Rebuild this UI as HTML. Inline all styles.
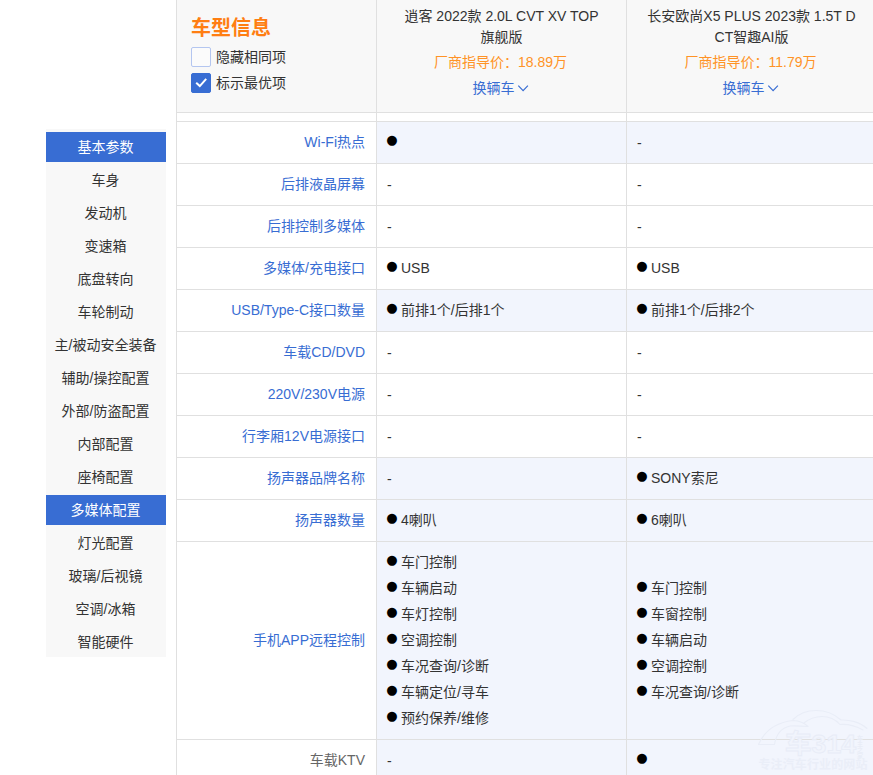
<!DOCTYPE html>
<html lang="zh-CN">
<head>
<meta charset="utf-8">
<title>车型参数对比</title>
<style>
*{box-sizing:border-box;margin:0;padding:0}
html,body{width:873px;height:775px;overflow:hidden;background:#fff}
body{position:relative;font-family:"Liberation Sans","Noto Sans CJK SC",sans-serif;font-size:14px;color:#333}
ul{list-style:none}
/* sidebar */
.side{position:absolute;left:46px;top:129px;width:120px;height:528px;background:#f8f8f8}
.side li{height:30px;line-height:30px;margin-top:3px;text-align:center;font-size:14px;color:#333;padding-right:1px}
.side li.on{background:#386dd3;color:#fff}
/* table */
.tb{position:absolute;left:176px;top:0;width:700px}
.hd{position:absolute;left:0;top:0;width:700px;height:113px;background:#f8f8f8;border-left:1px solid #e0e0e0;border-bottom:1px solid #e0e0e0}
.hd .c{position:absolute;top:0;height:112px;border-right:1px solid #e0e0e0}
.hd .c0{left:0;width:200px}
.hd .c1{left:200px;width:250px;text-align:center}
.hd .c2{left:450px;width:250px;text-align:center}
.ttl{position:absolute;left:14px;top:13px;font-size:20px;line-height:30px;font-weight:bold;color:#ff7e12}
.ck{position:absolute;left:14px;height:20px;line-height:20px;font-size:14px;color:#333;white-space:nowrap}
.ck i{display:inline-block;vertical-align:top;width:20px;height:20px;border:1px solid #b4c6f0;border-radius:2px;background:#fbfbfb;margin-right:5px;position:relative}
.ck i.on{background:#386dd3;border-color:#386dd3}
.ck i svg{position:absolute;left:-1px;top:-1px}
.nm{white-space:nowrap;position:absolute;left:0;width:100%;top:6px;line-height:21px;font-size:14px;color:#333;padding:0}
.pr{position:absolute;left:-1px;width:100%;top:52px;line-height:21px;font-size:14px;color:#ff9326}
.sw{position:absolute;left:-1px;width:100%;top:78px;line-height:21px;font-size:14px;color:#386dd3}
.sw svg{vertical-align:middle;margin-left:2px;position:relative;top:0px}
.gap{position:absolute;left:0;top:113px;width:700px;height:8px;border-left:1px solid #e0e0e0}
.gap b{position:absolute;top:0;height:8px;width:1px;background:#e0e0e0}
.rows{position:absolute;left:0;top:121px;width:700px;border-left:1px solid #e0e0e0}
.r{display:flex;width:701px;border-top:1px solid #e0e0e0;min-height:42px}
.r>div{flex:none;display:flex;flex-direction:column;justify-content:center;border-right:1px solid #e0e0e0}
.r .l{width:200px;text-align:right;padding-right:11px;padding-bottom:2px;color:#386dd3;line-height:20px}
.r .l.g{color:#666}
.r .v{width:250px;padding-left:9px;padding-bottom:2px;line-height:26px;color:#333}
.r.d .v{background:#f2f5fd}
.r .v p{white-space:nowrap}
.r .v p.n{padding-left:1px;position:relative;top:1px}
.r .v p span{display:inline-block;width:15px;height:26px;line-height:26px;vertical-align:top;font-family:"DejaVu Sans",sans-serif;font-size:13px;color:#000;position:relative;top:-2px;transform:translate(0.2px,0.4px)}
.r.big .v{padding-top:7px;padding-bottom:8px}
</style>
</head>
<body>
<ul class="side">
<li class="on">基本参数</li>
<li>车身</li>
<li>发动机</li>
<li>变速箱</li>
<li>底盘转向</li>
<li>车轮制动</li>
<li>主/被动安全装备</li>
<li>辅助/操控配置</li>
<li>外部/防盗配置</li>
<li>内部配置</li>
<li>座椅配置</li>
<li class="on">多媒体配置</li>
<li>灯光配置</li>
<li>玻璃/后视镜</li>
<li>空调/冰箱</li>
<li>智能硬件</li>
</ul>

<div class="tb">
 <div class="hd">
  <div class="c c0">
   <div class="ttl">车型信息</div>
   <div class="ck" style="top:47px"><i></i>隐藏相同项</div>
   <div class="ck" style="top:73px"><i class="on"><svg width="20" height="20" viewBox="0 0 20 20"><path d="M5.2 9.8 L8.8 13.1 L15.2 5.9" fill="none" stroke="#fff" stroke-width="2"/></svg></i>标示最优项</div>
  </div>
  <div class="c c1">
   <div class="nm">逍客 2022款 2.0L CVT XV TOP<br>旗舰版</div>
   <div class="pr">厂商指导价：18.89万</div>
   <div class="sw">换辆车<svg width="12" height="8" viewBox="0 0 12 8"><path d="M1.3 0.7 L6.1 5.6 L10.9 0.7" fill="none" stroke="#386dd3" stroke-width="1.2"/></svg></div>
  </div>
  <div class="c c2">
   <div class="nm">长安欧尚X5 PLUS 2023款 1.5T D<br>CT智趣AI版</div>
   <div class="pr">厂商指导价：11.79万</div>
   <div class="sw">换辆车<svg width="12" height="8" viewBox="0 0 12 8"><path d="M1.3 0.7 L6.1 5.6 L10.9 0.7" fill="none" stroke="#386dd3" stroke-width="1.2"/></svg></div>
  </div>
 </div>
 <div class="gap"><b style="left:199px"></b><b style="left:449px"></b></div>
 <div class="rows">
  <div class="r d"><div class="l">Wi-Fi热点</div><div class="v"><p><span>●</span></p></div><div class="v"><p class="n">-</p></div></div>
  <div class="r"><div class="l">后排液晶屏幕</div><div class="v"><p class="n">-</p></div><div class="v"><p class="n">-</p></div></div>
  <div class="r"><div class="l">后排控制多媒体</div><div class="v"><p class="n">-</p></div><div class="v"><p class="n">-</p></div></div>
  <div class="r"><div class="l">多媒体/充电接口</div><div class="v"><p><span>●</span>USB</p></div><div class="v"><p><span>●</span>USB</p></div></div>
  <div class="r d"><div class="l">USB/Type-C接口数量</div><div class="v"><p><span>●</span>前排1个/后排1个</p></div><div class="v"><p><span>●</span>前排1个/后排2个</p></div></div>
  <div class="r"><div class="l">车载CD/DVD</div><div class="v"><p class="n">-</p></div><div class="v"><p class="n">-</p></div></div>
  <div class="r"><div class="l">220V/230V电源</div><div class="v"><p class="n">-</p></div><div class="v"><p class="n">-</p></div></div>
  <div class="r"><div class="l">行李厢12V电源接口</div><div class="v"><p class="n">-</p></div><div class="v"><p class="n">-</p></div></div>
  <div class="r d"><div class="l">扬声器品牌名称</div><div class="v"><p class="n">-</p></div><div class="v"><p><span>●</span>SONY索尼</p></div></div>
  <div class="r d"><div class="l">扬声器数量</div><div class="v"><p><span>●</span>4喇叭</p></div><div class="v"><p><span>●</span>6喇叭</p></div></div>
  <div class="r d big"><div class="l">手机APP远程控制</div><div class="v"><p><span>●</span>车门控制</p><p><span>●</span>车辆启动</p><p><span>●</span>车灯控制</p><p><span>●</span>空调控制</p><p><span>●</span>车况查询/诊断</p><p><span>●</span>车辆定位/寻车</p><p><span>●</span>预约保养/维修</p></div><div class="v"><p><span>●</span>车门控制</p><p><span>●</span>车窗控制</p><p><span>●</span>车辆启动</p><p><span>●</span>空调控制</p><p><span>●</span>车况查询/诊断</p></div></div>
  <div class="r d"><div class="l g">车载KTV</div><div class="v"><p class="n">-</p></div><div class="v"><p><span>●</span></p></div></div>
 </div>
</div>
<svg class="wm" width="120" height="70" viewBox="0 0 120 70" style="position:absolute;left:753px;top:705px;pointer-events:none">
 <g fill="none" stroke="#e9edf7" stroke-width="1.1" stroke-linejoin="round" stroke-linecap="round">
  <path d="M5.5 39.5 C11 27 22 17.5 40 15.5 C47 15.8 52 18.5 55 21.5 C49 21 43 20.5 37 21 C28 23 23 30 21.5 39.5 Z"/>
  <path d="M40 14.5 C46 8.5 55 5.5 63 5.5 C73 5.5 82 9.5 88 15 C96 14.5 107 17 114 23.5"/>
  <path d="M51 18 C56 14 63 11.5 69 11.5 C77 11.5 83 15 87 19.5 C94 19 103 21 110 25"/>
 </g>
 <text x="32" y="48" font-family="'Liberation Sans','Noto Sans CJK SC',sans-serif" font-weight="bold" font-size="26" fill="#f1f4fc" stroke="#e8ecf7" stroke-width="0.9" textLength="71" lengthAdjust="spacingAndGlyphs">车314</text>
 <text x="104" y="35" font-family="'Liberation Sans','Noto Sans CJK SC',sans-serif" font-weight="bold" font-size="6" fill="#e9edf7"><tspan x="104" dy="0">车</tspan><tspan x="104" dy="6">主</tspan><tspan x="104" dy="6">之</tspan><tspan x="104" dy="6">家</tspan></text>
 <text x="5.5" y="63.5" font-family="'Liberation Sans','Noto Sans CJK SC',sans-serif" font-weight="bold" font-size="12" fill="#eaeef8" textLength="109" lengthAdjust="spacing">专注汽车行业的网站</text>
</svg>
</body>
</html>
